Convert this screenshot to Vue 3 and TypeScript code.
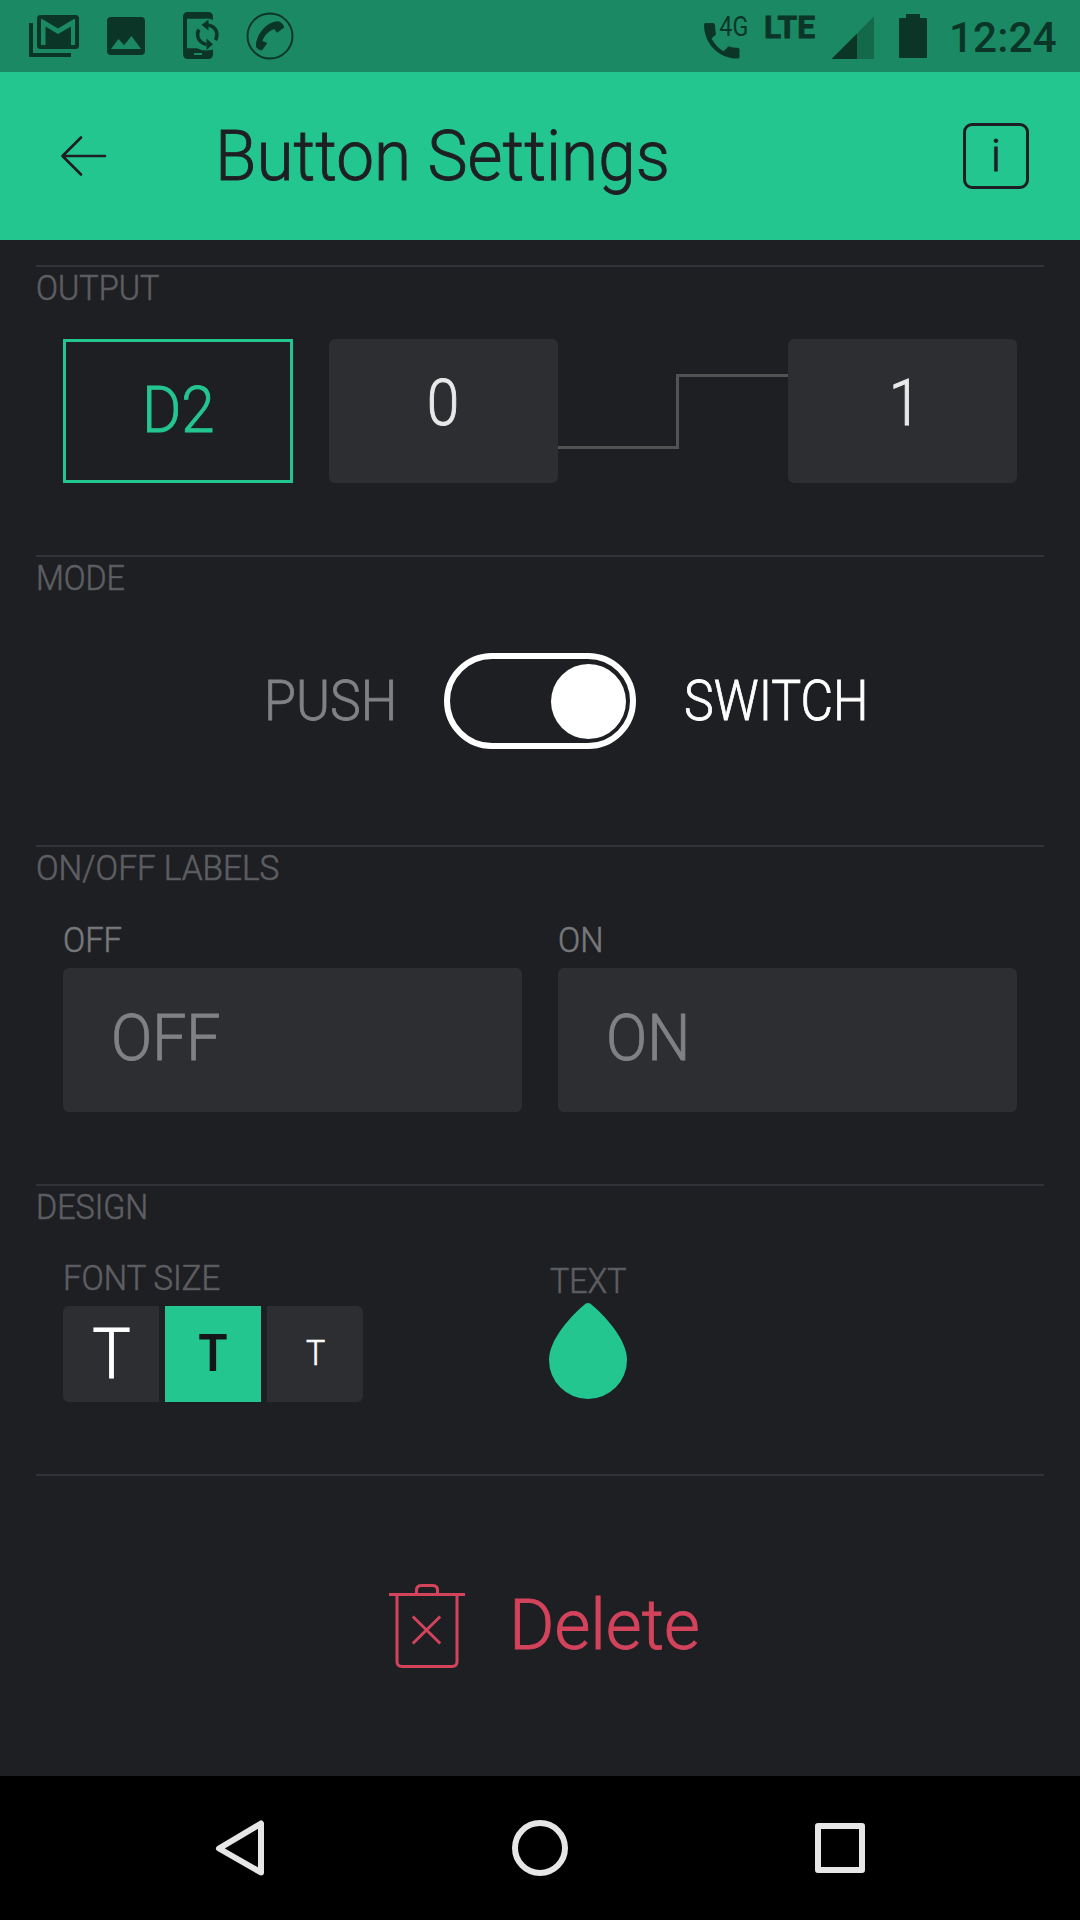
<script setup lang="ts">
import { ref } from 'vue'

interface Field {
  label: string
  placeholder: string
}

interface SizeOption {
  id: 'large' | 'medium' | 'small'
}

const fields: Field[] = [
  { label: 'OFF', placeholder: 'OFF' },
  { label: 'ON', placeholder: 'ON' },
]
const sizes: SizeOption[] = [{ id: 'large' }, { id: 'medium' }, { id: 'small' }]
const selectedSize = ref<SizeOption['id']>('medium')
const isSwitch = ref(true)
</script>

<template>
  <div class="screen">
    <div class="status">
      <svg class="status-left" viewBox="0 0 300 72" width="300" height="72">
        <path d="M31 23V55H71" fill="none" stroke="#0b3627" stroke-width="4" />
        <rect x="37" y="15" width="42" height="34" rx="3.5" fill="#0b3627" />
        <path d="M41 19H42L58 28.5L74 19H75V45H71V26.5L58 34L45.5 26.5V45H41Z" fill="#1b8a64" />
        <path
          fill="#0b3627"
          fill-rule="evenodd"
          d="M111 17H141Q145 17 145 21V51Q145 55 141 55H111Q107 55 107 51V21Q107 17 111 17ZM111 49H141L131.5 36L124 45.3L118.5 39Z"
        />
        <path
          fill="#0b3627"
          fill-rule="evenodd"
          d="M188 12H208Q213 12 213 17V20Q208 18 204 18.7H187V48.3H197Q204 52 213 49.5V54Q213 59 208 59H188Q183 59 183 54V17Q183 12 188 12ZM194 53V55H202V53Z"
        />
        <path d="M208 25Q214 26 216.200 31Q218 36 215.300 40M206.500 44.500Q200 43 198.100 37.500Q196.800 33 198.900 29.500" fill="none" stroke="#0b3627" stroke-width="3.600" />
        <path d="M201.500 25L208.500 19.500V30.500ZM213 44.200L206.500 38.500V50Z" fill="#0b3627" />
        <circle cx="270" cy="36" r="22.500" fill="none" stroke="#0b3627" stroke-width="2" />
        <path
          fill="#0b3627"
          d="M256 46.500C255.500 35.500 266 21.500 278 21.200C281 21.500 284 25 284.200 27.500L277 32.800L274.200 29C268.500 31 263.500 36.500 262.500 41L267.400 43L262 50.500C259.500 50.200 256.500 48.500 256 46.500Z"
        />
      </svg>
      <div class="status-right">
        <svg class="call" viewBox="702 0 56 72" width="56" height="72">
          <path
            fill="#0b3627"
            d="M705.500 23H713Q714.800 23 715 25Q715.200 30 716 34.500L711.500 38.500Q716 47 723.500 51.200L728.500 46.200Q733 47.800 737.500 47.700Q739.500 47.700 739.500 49.500V57Q739.500 58.600 738 58.600C718 58.600 704 43 704 25Q704 23 705.500 23Z"
          />
          <text x="719.300" y="36" textLength="29" lengthAdjust="spacingAndGlyphs">4G</text>
        </svg>
        <span class="lte">LTE</span>
        <svg class="signal" viewBox="831 0 97 72" width="97" height="72">
          <path d="M857 33.500L874 16.500V59H857Z" fill="#14694a" />
          <path d="M831.500 59L857 33.500V59Z" fill="#0b3627" />
          <path d="M906 18V14H920V18H926Q927 18 927 19V57Q927 58 926 58H900Q899 58 899 57V19Q899 18 900 18Z" fill="#0b3627" />
        </svg>
        <span class="clock">12:24</span>
      </div>
    </div>

    <header class="header">
      <svg class="back" viewBox="0 0 48 44" width="48" height="44">
        <path d="M45 22H3M21 3.500L2.500 22L21 40.500" fill="none" stroke="#1e1f23" stroke-width="2.700" stroke-linecap="round" stroke-linejoin="round" />
      </svg>
      <h1 class="title">Button Settings</h1>
      <button class="info">i</button>
    </header>

    <main class="body">
      <section class="section">
        <h2 class="label output-label">OUTPUT</h2>
        <div class="output-row">
          <div class="pin"><span>D2</span></div>
          <div class="value"><span>0</span></div>
          <svg class="step" viewBox="0 0 230 144" width="230" height="144">
            <path d="M0 108.500H119.500V36.500H230" fill="none" stroke="#525252" stroke-width="3" />
          </svg>
          <div class="value one"><span>1</span></div>
        </div>
      </section>

      <section class="section">
        <h2 class="label mode-label">MODE</h2>
        <div class="mode-row">
          <span class="mode push" :class="{ active: !isSwitch }">PUSH</span>
          <button class="toggle" :class="{ on: isSwitch }" @click="isSwitch = !isSwitch"><i class="knob"></i></button>
          <span class="mode switch" :class="{ active: isSwitch }">SWITCH</span>
        </div>
      </section>

      <section class="section tall">
        <h2 class="label labels-label">ON/OFF LABELS</h2>
        <div class="fields">
          <div v-for="f in fields" :key="f.label" class="field">
            <div class="label caption">{{ f.label }}</div>
            <div class="input"><span>{{ f.placeholder }}</span></div>
          </div>
        </div>
      </section>

      <section class="section">
        <h2 class="label design-label">DESIGN</h2>
        <div class="design-row">
          <div class="font-size">
            <div class="label size-label">FONT SIZE</div>
            <div class="sizes">
              <button
                v-for="s in sizes"
                :key="s.id"
                class="size"
                :class="[s.id, { selected: s.id === selectedSize }]"
                @click="selectedSize = s.id"
              ><span>T</span></button>
            </div>
          </div>
          <div class="color">
            <div class="label text-label">TEXT</div>
            <svg class="drop" viewBox="0 0 78 96" width="78" height="96">
              <path d="M36.500 .8Q39 -.8 41.500 .8C55 12 78 36 78 57A39 39 0 0 1 0 57C0 36 23 12 36.500 .8Z" fill="#24c690" />
            </svg>
          </div>
        </div>
      </section>

      <section class="section delete-row">
        <svg viewBox="389 1584 76 84" width="76" height="84">
          <g fill="none" stroke="#d3435c" stroke-width="3">
            <path d="M389 1594.500H465M416.500 1594V1590.500Q416.500 1585.500 421 1585.500H433Q437.500 1585.500 437.500 1590.500V1594" />
            <path d="M397 1595V1661.500Q397 1666.500 402 1666.500H452Q457 1666.500 457 1661.500V1595" />
            <path d="M412.800 1616.500L440.200 1643.500M440.200 1616.500L412.800 1643.500" />
          </g>
        </svg>
        <span class="delete">Delete</span>
      </section>
    </main>

    <nav class="nav">
      <svg viewBox="0 0 1080 144" width="1080" height="144">
        <g fill="none" stroke="#e6e6e6" stroke-width="6" stroke-linejoin="round">
          <path d="M261 47.500V96.500L219 72.500Z" />
          <circle cx="540" cy="72" r="25" />
          <rect x="818" y="50" width="44" height="44" />
        </g>
      </svg>
    </nav>
  </div>
</template>

<style>
body {
  margin: 0;
  background: #1e1f23;
}
</style>

<style scoped>
.screen {
  width: 1080px;
  height: 1920px;
  display: flex;
  flex-direction: column;
  background: #1e1f23;
  font-family: Roboto, "Open Sans", sans-serif;
  font-weight: 300;
  overflow: hidden;
  box-sizing: border-box;
}
svg {
  display: block;
  flex: none;
}
button {
  font: inherit;
  padding: 0;
  border: 0;
  background: none;
  flex: none;
}
.status {
  height: 72px;
  display: flex;
  justify-content: space-between;
  background: #1b8a64;
  color: #0b3627;
}
.status-right {
  display: flex;
  width: 378px;
}
.call text {
  font: 400 27px Roboto, sans-serif;
  fill: #0b3627;
}
.lte {
  font-size: 32px;
  font-weight: 700;
  line-height: 54px;
  width: 66px;
  margin-left: 6px;
  transform: scaleX(.99);
  transform-origin: left;
  -webkit-text-stroke: .9px #0b3627;
}
.signal {
  margin-left: 1px;
}
.clock {
  font-size: 42px;
  font-weight: 500;
  line-height: 75px;
  margin-left: 21px;
  transform: scaleX(1.01);
  transform-origin: left;
}
.header {
  height: 168px;
  display: flex;
  align-items: center;
  background: #24c690;
  color: #1e1f23;
}
.back {
  margin-left: 60px;
}
.title {
  margin: 0 0 1px 107px;
  width: 700px;
  font-size: 70px;
  font-weight: 300;
  line-height: 84px;
  white-space: nowrap;
  transform: scaleX(.964);
  transform-origin: left;
  -webkit-text-stroke: .9px #1e1f23;
}
.info {
  width: 66px;
  height: 66px;
  margin-left: 48px;
  box-sizing: border-box;
  border: 3px solid #1e1f23;
  border-radius: 9px;
  color: #1e1f23;
  font-size: 44px;
  line-height: 60px;
  -webkit-text-stroke: .9px #1e1f23;
}
.body {
  flex: 1;
  padding: 25px 36px 0;
  display: flex;
  flex-direction: column;
}
.section {
  height: 290px;
  box-sizing: border-box;
  border-top: 2px solid #323338;
}
.section.tall {
  height: 339px;
}
.label {
  margin: 0;
  height: 42px;
  font-size: 35px;
  font-weight: 300;
  line-height: 44px;
  color: #5d5e62;
  white-space: nowrap;
  transform-origin: left;
  -webkit-text-stroke: .6px currentColor;
}
.output-label { transform: scaleX(.927); }
.mode-label { transform: scaleX(.918); }
.labels-label { transform: scaleX(.953); }
.design-label { transform: scaleX(.922); }
.size-label { transform: scaleX(.939); }
.text-label { transform: translateX(1px) scaleX(.918); }
.output-row {
  display: flex;
  margin: 30px 27px 0;
}
.pin,
.value {
  height: 144px;
  flex: none;
  box-sizing: border-box;
  display: flex;
  align-items: center;
  justify-content: center;
  font-size: 65px;
}
.pin {
  width: 230px;
  margin-right: 36px;
  padding-bottom: 2px;
  border: 3px solid #24c690;
  color: #24c690;
  -webkit-text-stroke: .9px #24c690;
}
.pin span {
  transform: scaleX(.924);
}
.value {
  width: 229px;
  padding-bottom: 17px;
  border-radius: 6px;
  background: #2d2e31;
  color: #e8e9e9;
  -webkit-text-stroke: .9px #e8e9e9;
}
.value span {
  transform: scaleX(.9);
}
.value.one {
  padding-left: 5px;
}
.step {
  flex: none;
}
.mode-row {
  display: flex;
  align-items: center;
  height: 96px;
  margin-top: 54px;
}
.mode {
  font-size: 56px;
  line-height: 66px;
  color: #808184;
  transform-origin: left;
  -webkit-text-stroke: .8px currentColor;
}
.mode.active {
  color: #fff;
}
.push {
  width: 180px;
  margin-left: 228px;
  transform: scaleX(.925);
}
.switch {
  margin-left: 48px;
  transform: scaleX(.895);
}
.toggle {
  display: flex;
  align-items: center;
  width: 192px;
  height: 96px;
  padding: 0 4.500px;
  box-sizing: border-box;
  border: 6px solid #fff;
  border-radius: 48px;
}
.toggle.on {
  justify-content: flex-end;
}
.knob {
  width: 75px;
  height: 75px;
  border-radius: 50%;
  background: #fff;
}
.fields {
  display: flex;
  gap: 36px;
  margin: 30px 27px 0;
}
.field {
  flex: 1;
}
.caption {
  margin-bottom: 7px;
  color: #77787b;
  transform: scaleX(.935);
}
.input {
  height: 144px;
  box-sizing: border-box;
  display: flex;
  align-items: center;
  padding: 0 48px 4px;
  border-radius: 6px;
  background: #2d2e31;
  color: #808184;
  font-size: 65px;
  -webkit-text-stroke: .9px #808184;
}
.input span {
  transform: scaleX(.935);
  transform-origin: left;
}
.design-row {
  display: flex;
  margin: 29px 27px 0;
}
.font-size {
  width: 486px;
}
.sizes {
  display: flex;
  gap: 6px;
  margin-top: 7px;
}
.size {
  width: 96px;
  height: 96px;
  background: #2d2e31;
  color: #fff;
}
.size span {
  display: block;
  transform: scaleX(.92);
}
.size.large {
  font-size: 70px;
  line-height: 92px;
  padding-left: 1px;
  border-radius: 6px 0 0 6px;
  -webkit-text-stroke: .9px #fff;
}
.size.medium {
  font-size: 52px;
  line-height: 92px;
  font-weight: 600;
}
.size.small {
  font-size: 35px;
  line-height: 94px;
  padding-left: 1px;
  border-radius: 0 6px 6px 0;
  -webkit-text-stroke: .6px #fff;
}
.size.selected {
  background: #24c690;
  color: #15161a;
}
.color {
  margin-top: 3px;
}
.drop {
  margin-top: 1px;
}
.delete-row {
  height: 302px;
  display: flex;
  align-items: center;
  padding-left: 353px;
}
.delete {
  margin: 0 0 2px 44px;
  font-size: 70px;
  color: #d3435c;
  transform: scaleX(.99);
  transform-origin: left;
  -webkit-text-stroke: .9px #d3435c;
}
.nav {
  height: 144px;
  background: #000;
}
</style>
